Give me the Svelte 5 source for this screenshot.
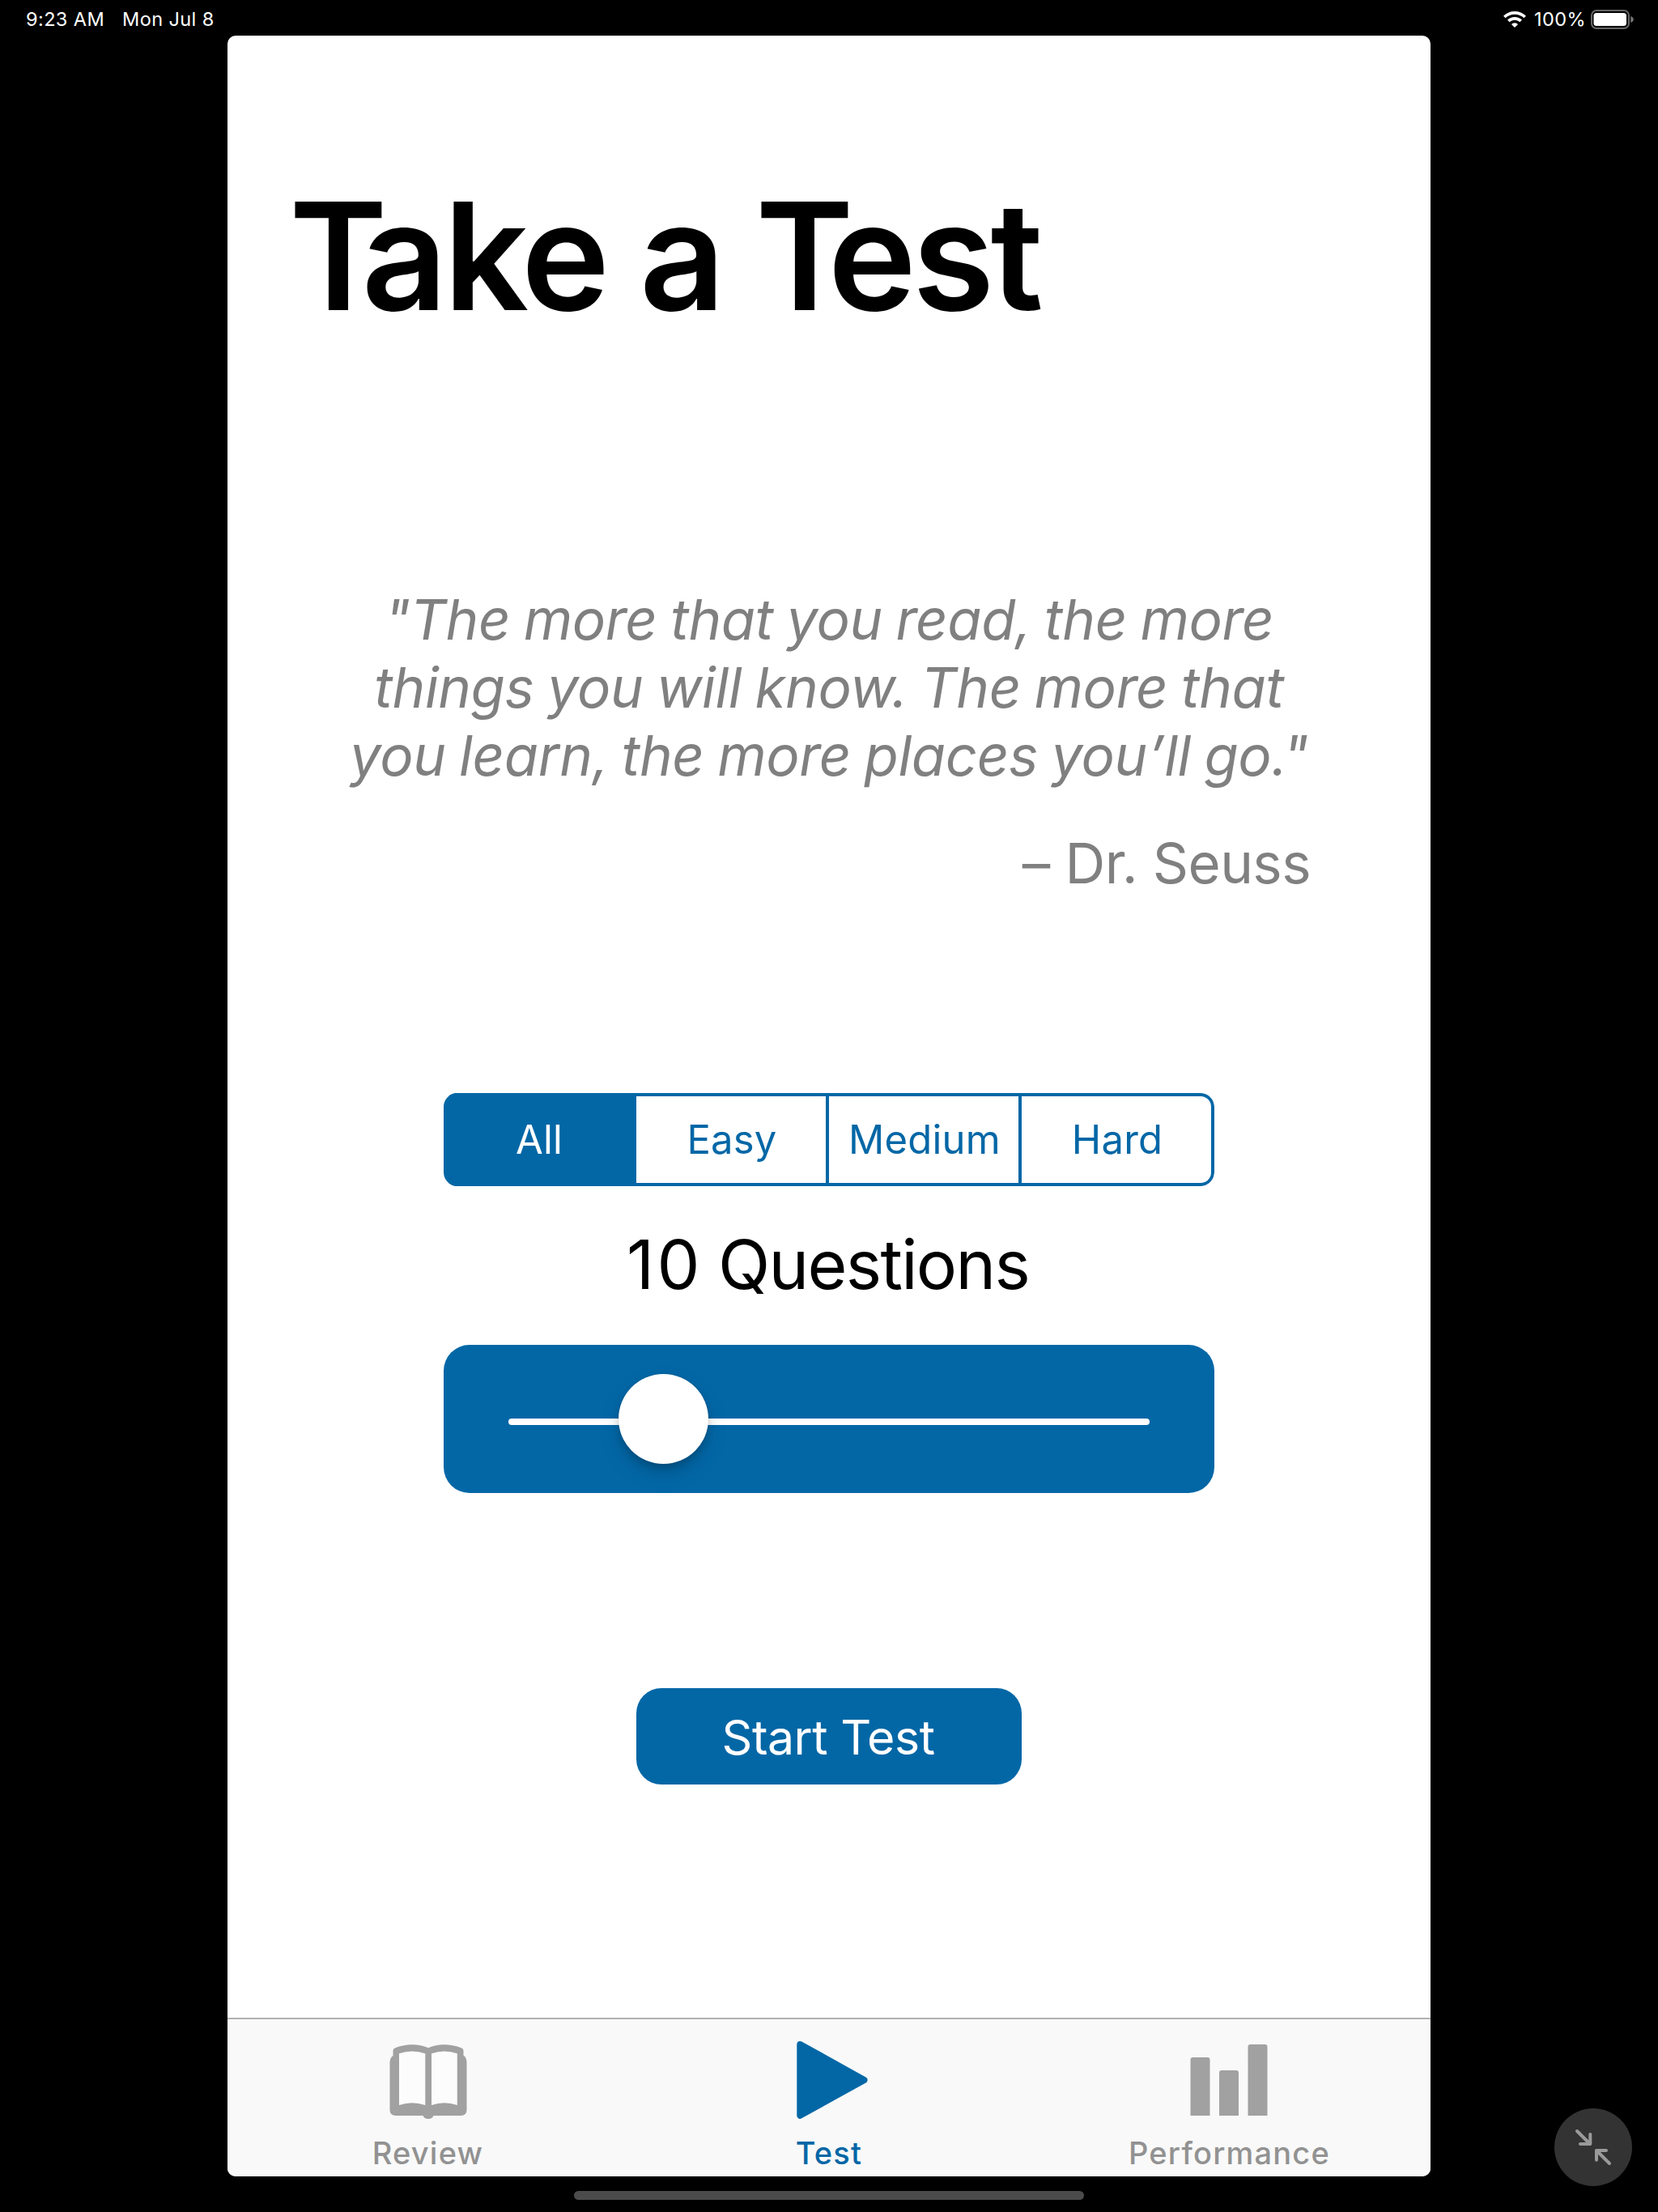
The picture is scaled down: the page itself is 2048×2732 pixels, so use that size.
<script>
  const levels = ['All', 'Easy', 'Medium', 'Hard'];
  let selected = $state('All');
  let tab = $state('Test');
</script>

<div class="device">
  <header class="status">
    <div class="clock">
      <span class="time">9:23 AM</span>
      <span class="date">Mon Jul 8</span>
    </div>
    <div class="indicators">
      <svg class="wifi" viewBox="0 0 28 20" width="28" height="20">
        <path d="M14 20 L9.9 15.9 A5.9 5.9 0 0 1 18.1 15.9 Z" fill="#fff" />
        <path d="M6.3 11.9 A11.2 11.2 0 0 1 21.7 11.9" fill="none" stroke="#fff" stroke-width="3.6" />
        <path d="M1.3 7 A18.2 18.2 0 0 1 26.7 7" fill="none" stroke="#fff" stroke-width="3.6" />
      </svg>
      <span class="percent">100%</span>
      <svg class="battery" viewBox="0 0 53 24" width="53" height="24">
        <rect x="1" y="1" width="46" height="22" rx="6" fill="none" stroke="#666" stroke-width="2" />
        <rect x="3.5" y="4" width="40.5" height="16" rx="3.5" fill="#fff" />
        <path d="M49.3 8 Q52.8 9.5 52.8 12 Q52.8 14.5 49.3 16 Z" fill="#777" />
      </svg>
    </div>
  </header>

  <main class="app">
    <div class="content">
      <h1><span class="kern">T</span>ake a <span class="kern">T</span>est</h1>
      <blockquote>
        "The more that you read, the more<br />things you will know. The more that<br />you learn, the more places you’ll go."
      </blockquote>
      <p class="author">– Dr. Seuss</p>

      <div class="segments">
        {#each levels as level}
          <button class="segment" class:on={selected === level} onclick={() => (selected = level)}>{level}</button>
        {/each}
      </div>

      <p class="count"><span class="number">10</span> Questions</p>

      <div class="slider">
        <div class="track"><div class="thumb"></div></div>
      </div>

      <button class="start">Start Test</button>
    </div>

    <nav>
      <button class="tab" class:active={tab === 'Review'} onclick={() => (tab = 'Review')}>
        <svg viewBox="0 0 96 98" width="96" height="98">
          <path
            fill="currentColor"
            d="M4.5 15 V9 Q4.500 6 8 5 Q29 -2.500 48 5.200 Q67 -2.500 88 5 Q91.500 6 91.500 9 V14.500 Q95.500 17 95.500 23 V82 Q95.500 89 88 89 H54.500 Q53 93 48 93 Q43 93 41.500 89 H8 Q0.500 89 0.500 82 V23 Q0.500 17.500 4.500 15 Z"
          />
          <path fill="#fcfcfc" d="M12 12.300 V76 Q28 70.500 44.300 76 V12.300 Q28 6.500 12 12.300 Z M52 12.300 V76 Q68 70.500 83.800 76 V12.300 Q68 6.500 52 12.300 Z" />
        </svg>
        <span>Review</span>
      </button>
      <button class="tab" class:active={tab === 'Test'} onclick={() => (tab = 'Test')}>
        <svg viewBox="0 0 96 98" width="96" height="98">
          <path
            fill="currentColor"
            stroke="currentColor"
            stroke-width="8"
            stroke-linejoin="round"
            d="M12.300 0.900 L91.500 45 L12.300 88.700 Z"
          />
        </svg>
        <span>Test</span>
      </button>
      <button class="tab" class:active={tab === 'Performance'} onclick={() => (tab = 'Performance')}>
        <svg viewBox="0 0 96 98" width="96" height="98">
          <g fill="currentColor">
            <path d="M-0.500 89 V20 Q-0.500 17 2.500 17 H20.500 Q23.500 17 23.500 20 V89 Z" />
            <path d="M35 89 V36 Q35 33 38 33 H56 Q59 33 59 36 V89 Z" />
            <path d="M70.500 89 V4 Q70.500 1 73.500 1 H91.500 Q94.500 1 94.500 4 V89 Z" />
          </g>
        </svg>
        <span>Performance</span>
      </button>
    </nav>
  </main>

  <div class="home"></div>

  <button class="shrink" aria-label="Shrink">
    <svg viewBox="0 0 96 96" width="96" height="96" fill="none" stroke="#9a9a9a" stroke-width="4" stroke-linecap="round" stroke-linejoin="round">
      <path d="M28 28 L44 44 M44.300 32 V44 H32" />
      <path d="M68 68 L52 52 M52 63.700 V52 H64" />
    </svg>
  </button>
</div>

<style>
  :global(body) {
    background: #000;
  }
  .device {
    position: relative;
    width: 2048px;
    height: 2732px;
    background: #000;
    display: flex;
    flex-direction: column;
    align-items: center;
    overflow: hidden;
    font-family: Inter, 'Liberation Sans', sans-serif;
  }
  button {
    border: 0;
    padding: 0;
    margin: 0;
    background: none;
    font: inherit;
    color: inherit;
  }
  .status {
    box-sizing: border-box;
    width: 100%;
    height: 44px;
    padding: 0 30px 0 32px;
    display: flex;
    justify-content: space-between;
    color: #fff;
    font-size: 23.500px;
    line-height: 47px;
    letter-spacing: 0.400px;
    white-space: nowrap;
  }
  .clock {
    display: flex;
    gap: 22px;
  }
  .indicators {
    display: flex;
  }
  .wifi {
    margin: 14px 10px 0 0;
  }
  .battery {
    margin: 12px 0 0 6px;
  }
  .app {
    width: 1486px;
    height: 2644px;
    border-radius: 10px;
    overflow: hidden;
    background: #fff;
    display: flex;
    flex-direction: column;
  }
  .content {
    flex: 1;
    display: flex;
    flex-direction: column;
    align-items: center;
  }
  h1 {
    align-self: flex-start;
    margin: 171.600px 0 0 76px;
    font-size: 184.500px;
    line-height: 200px;
    font-weight: 600;
    letter-spacing: -4.800px;
    color: #000;
    white-space: nowrap;
  }
  .kern {
    letter-spacing: -32px;
  }
  blockquote {
    margin: 307px 0 0;
    font-size: 69px;
    line-height: 84.330px;
    font-style: italic;
    letter-spacing: -0.400px;
    word-spacing: -2.500px;
    text-align: center;
    color: #808080;
    white-space: nowrap;
  }
  .author {
    align-self: flex-end;
    margin: 48.500px 148px 0 0;
    font-size: 69px;
    line-height: 84px;
    letter-spacing: -0.600px;
    color: #808080;
    white-space: nowrap;
  }
  .segments {
    display: grid;
    grid-template-columns: repeat(4, 1fr);
    width: 952px;
    height: 115px;
    margin-top: 241.700px;
    border-radius: 17px;
    overflow: hidden;
    background: #fff;
  }
  .segment {
    border: solid #0367a6;
    border-width: 4px 4px 4px 0;
    padding-left: 2px;
    color: #0367a6;
    font-size: 49px;
    letter-spacing: 0.200px;
  }
  .segment:last-child {
    border-radius: 0 17px 17px 0;
  }
  .segment.on {
    background: #0367a6;
    color: #fff;
  }
  .count {
    margin: 47.400px 0 0;
    padding-right: 3px;
    font-size: 84px;
    line-height: 100px;
    letter-spacing: -1.700px;
    color: #000;
  }
  .number {
    letter-spacing: 3.500px;
    margin-right: -3px;
  }
  .slider {
    box-sizing: border-box;
    width: 952px;
    height: 183px;
    margin-top: 48.600px;
    padding: 91px 80px 0;
    border-radius: 32px;
    background: #0367a6;
  }
  .track {
    position: relative;
    height: 8px;
    border-radius: 4px;
    background: #fff;
  }
  .thumb {
    position: absolute;
    left: 136px;
    top: -55px;
    width: 111px;
    height: 111px;
    border-radius: 50%;
    background: #fff;
    box-shadow: 0 12px 26px rgba(0, 0, 0, 0.13), 0 6px 8px rgba(0, 0, 0, 0.15), 0 0 1px 1px rgba(0, 0, 0, 0.04);
  }
  .start {
    box-sizing: border-box;
    width: 476px;
    height: 119px;
    margin-top: 241px;
    padding: 2px 2px 0 0;
    border-radius: 31px;
    background: #0367a6;
    color: #fff;
    font-size: 59px;
    letter-spacing: -0.500px;
  }
  nav {
    box-sizing: border-box;
    height: 196px;
    border-top: 2px solid #b2b2b2;
    background: #f9f9f9;
    display: grid;
    grid-template-columns: 495px 496px 493px;
  }
  .tab {
    display: flex;
    flex-direction: column;
    align-items: center;
    padding-top: 30px;
    color: #a1a1a1;
    font-size: 38px;
    line-height: 46px;
    font-weight: 500;
    letter-spacing: 1.200px;
  }
  .tab span {
    margin-top: 14px;
    color: #929292;
  }
  .tab svg {
    overflow: visible;
    flex: none;
  }
  .tab.active,
  .tab.active span {
    color: #0367a6;
  }
  .home {
    width: 630px;
    height: 11px;
    margin-top: 18px;
    border-radius: 6px;
    background: #4b4b4b;
  }
  .shrink {
    position: absolute;
    right: 32px;
    bottom: 32px;
    width: 96px;
    height: 96px;
    border-radius: 50%;
    background: #333;
  }
  .shrink svg {
    display: block;
  }
</style>
